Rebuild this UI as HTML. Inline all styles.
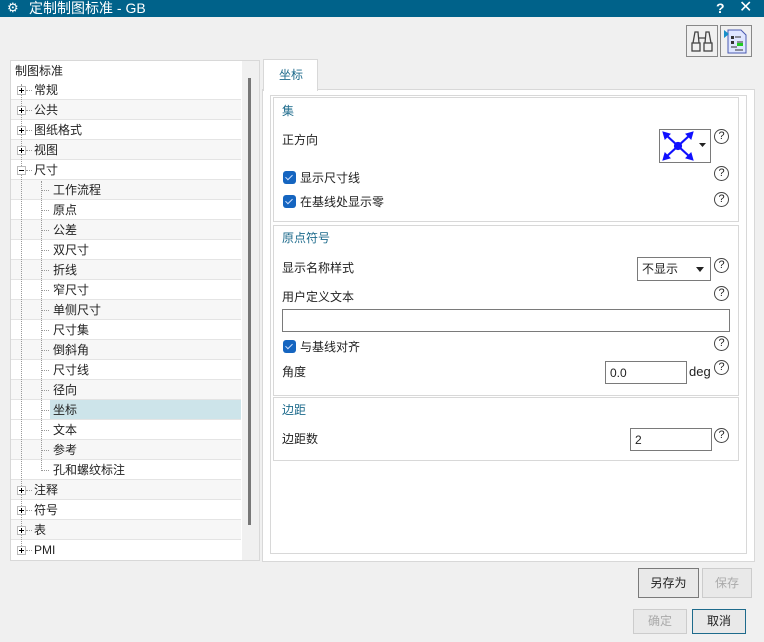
<!DOCTYPE html><html><head><meta charset="utf-8"><style>
*{margin:0;padding:0;box-sizing:border-box}
body{width:764px;height:642px;background:#f0f0f0;font-family:"Liberation Sans","Noto Sans CJK SC",sans-serif;font-size:12px;color:#222;position:relative;overflow:hidden}
.a{position:absolute}
.t{position:absolute;white-space:nowrap;line-height:14px}
.row{position:absolute;left:11px;width:230px;height:20px;border-bottom:1px solid #e4e4e4}
.row.g{background:#f7f7f7}
.row span{position:absolute;top:3px;line-height:14px;z-index:3}
.box{position:absolute;left:6px;top:6px;width:9px;height:9px;border:1px solid #bbb;background:#fff;z-index:4}
.box:before{content:"";position:absolute;left:1px;top:3px;width:5px;height:1px;background:#000}
.box.p:after{content:"";position:absolute;left:3px;top:1px;width:1px;height:5px;background:#000}
.hd{position:absolute;left:15px;top:10px;width:6px;border-top:1px dotted #999}
.hc{position:absolute;left:30px;top:10px;width:8px;border-top:1px dotted #999;z-index:3}
.vl{position:absolute;border-left:1px dotted #999;z-index:2}
.grp{position:absolute;left:273px;width:466px;border:1px solid #d8d8d8;background:#fff}
.gt{color:#1e6b8c}
.q{position:absolute;width:15px;height:15px;border:1px solid #444;border-radius:50%;font-size:11px;line-height:13px;text-align:center;color:#222;background:#fff}
.cb{position:absolute;width:13px;height:13px;background:#1565c0;border-radius:3px}
.cb:after{content:"";position:absolute;left:4px;top:2px;width:3px;height:6px;border:solid #cfe0ff;border-width:0 1px 1px 0;transform:rotate(45deg)}
.inp{position:absolute;background:#fff;border:1px solid #7a7a7a;padding-left:8px;line-height:22px;font-size:12px}
.btn{position:absolute;border:1px solid #adadad;background:#e9e9e9;text-align:center;font-size:12px}
</style></head><body>
<div class="a" style="left:0;top:0;width:764px;height:17px;background:#00628a"></div>
<div class="t" style="left:7px;top:1px;color:#fff;font-size:13px">⚙</div>
<div class="t" style="left:29px;top:0px;color:#fff;font-size:14px;line-height:16px">定制制图标准 - GB</div>
<div class="t" style="left:716px;top:0px;color:#fff;font-size:14px;font-weight:bold;line-height:16px">?</div>
<div class="t" style="left:739px;top:-1px;color:#fff;font-size:16px;line-height:18px">✕</div>

<div class="a" style="left:686px;top:25px;width:32px;height:32px;border:1px solid #888;background:#f0f0f0">
<svg width="30" height="30"><g fill="none" stroke="#444" stroke-width="1.3"><rect x="5" y="17" width="8" height="8"/><rect x="17" y="17" width="8" height="8"/><path d="M6 17 L8 6 H11 L12 17 M18 17 L19 6 H22 L24 17 M12 12 H18"/></g></svg></div>
<div class="a" style="left:720px;top:25px;width:32px;height:32px;border:1px solid #888;background:#f0f0f0">
<svg width="30" height="30"><path d="M7 4 H20 L25 9 V27 H7Z" fill="#dfe6ff" stroke="#4a5ab0"/><path d="M3 4 L8 8 L3 12Z" fill="#1a8fc8"/><rect x="10" y="10" width="3" height="3" fill="#333"/><rect x="10" y="15" width="3" height="3" fill="#333"/><path d="M14 11 H20 M16 16 H22 M10 21 H16 M14 24 H22" stroke="#333"/><rect x="16" y="17" width="6" height="3" fill="#2c2"/></svg></div>

<!-- tree -->
<div class="a" style="left:10px;top:60px;width:250px;height:501px;border:1px solid #d8d8d8;background:#fff"></div>
<div class="a" style="left:242px;top:61px;width:17px;height:499px;background:#f0f0f0"></div>
<div class="a" style="left:248px;top:78px;width:3px;height:447px;background:#777"></div>
<div class="t" style="left:15px;top:64px">制图标准</div>
<div class="row" style="top:80px"><div class="box p"></div><div class="hd"></div><span style="left:23px">常规</span></div>
<div class="row g" style="top:100px"><div class="box p"></div><div class="hd"></div><span style="left:23px">公共</span></div>
<div class="row" style="top:120px"><div class="box p"></div><div class="hd"></div><span style="left:23px">图纸格式</span></div>
<div class="row g" style="top:140px"><div class="box p"></div><div class="hd"></div><span style="left:23px">视图</span></div>
<div class="row" style="top:160px"><div class="box"></div><div class="hd"></div><span style="left:23px">尺寸</span></div>
<div class="row g" style="top:180px"><div class="hc"></div><span style="left:42px">工作流程</span></div>
<div class="row" style="top:200px"><div class="hc"></div><span style="left:42px">原点</span></div>
<div class="row g" style="top:220px"><div class="hc"></div><span style="left:42px">公差</span></div>
<div class="row" style="top:240px"><div class="hc"></div><span style="left:42px">双尺寸</span></div>
<div class="row g" style="top:260px"><div class="hc"></div><span style="left:42px">折线</span></div>
<div class="row" style="top:280px"><div class="hc"></div><span style="left:42px">窄尺寸</span></div>
<div class="row g" style="top:300px"><div class="hc"></div><span style="left:42px">单侧尺寸</span></div>
<div class="row" style="top:320px"><div class="hc"></div><span style="left:42px">尺寸集</span></div>
<div class="row g" style="top:340px"><div class="hc"></div><span style="left:42px">倒斜角</span></div>
<div class="row" style="top:360px"><div class="hc"></div><span style="left:42px">尺寸线</span></div>
<div class="row g" style="top:380px"><div class="hc"></div><span style="left:42px">径向</span></div>
<div class="row" style="top:400px"><div class="hc"></div><div class="a" style="left:39px;top:0;width:191px;height:19px;background:#cde4ea"></div><span style="left:42px">坐标</span></div>
<div class="row" style="top:420px"><div class="hc"></div><span style="left:42px">文本</span></div>
<div class="row g" style="top:440px"><div class="hc"></div><span style="left:42px">参考</span></div>
<div class="row" style="top:460px"><div class="hc"></div><span style="left:42px">孔和螺纹标注</span></div>
<div class="row g" style="top:480px"><div class="box p"></div><div class="hd"></div><span style="left:23px">注释</span></div>
<div class="row" style="top:500px"><div class="box p"></div><div class="hd"></div><span style="left:23px">符号</span></div>
<div class="row g" style="top:520px"><div class="box p"></div><div class="hd"></div><span style="left:23px">表</span></div>
<div class="row" style="top:540px;border:none"><div class="box p"></div><div class="hd"></div><span style="left:23px">PMI</span></div>
<div class="vl" style="left:21px;top:84px;height:466px"></div>
<div class="vl" style="left:41px;top:181px;height:290px"></div>

<!-- right panel -->
<div class="a" style="left:262px;top:89px;width:493px;height:473px;border:1px solid #d8d8d8;background:#fff"></div>
<div class="a" style="left:263px;top:59px;width:55px;height:32px;border:1px solid #d8d8d8;border-bottom:none;background:#fff"></div>
<div class="t" style="left:279px;top:68px;color:#1e6b8c">坐标</div>
<div class="a" style="left:270px;top:95px;width:477px;height:459px;border:1px solid #d8d8d8;background:#fff"></div>

<div class="grp" style="top:97px;height:125px"></div>
<div class="t gt" style="left:282px;top:104px">集</div>
<div class="t" style="left:282px;top:133px">正方向</div>
<div class="a" style="left:659px;top:129px;width:52px;height:34px;border:1px solid #7a7a7a;background:#fff">
<svg width="50" height="32"><g stroke="#1010ff" stroke-width="2.2" fill="#1010ff"><path d="M6 5 L30 27 M30 5 L6 27"/><circle cx="18" cy="16" r="3"/><path d="M3 2 L10 4 L5 9Z M33 2 L26 4 L31 9Z M3 30 L10 28 L5 23Z M33 30 L26 28 L31 23Z" stroke-width="1"/></g><path d="M39 13 H46 L42.5 17Z" fill="#222"/></svg></div>
<div class="q" style="left:714px;top:129px">?</div>
<div class="cb" style="left:283px;top:171px"></div><div class="t" style="left:300px;top:171px">显示尺寸线</div>
<div class="q" style="left:714px;top:166px">?</div>
<div class="cb" style="left:283px;top:195px"></div><div class="t" style="left:300px;top:195px">在基线处显示零</div>
<div class="q" style="left:714px;top:192px">?</div>

<div class="grp" style="top:225px;height:171px"></div>
<div class="t gt" style="left:282px;top:231px">原点符号</div>
<div class="t" style="left:282px;top:261px">显示名称样式</div>
<div class="inp" style="left:637px;top:257px;width:74px;height:24px;line-height:22px;padding-left:4px">不显示<svg class="a" style="left:58px;top:9px" width="8" height="5"><path d="M0 0H8L4 5Z" fill="#222"/></svg></div>
<div class="q" style="left:714px;top:258px">?</div>
<div class="t" style="left:282px;top:290px">用户定义文本</div>
<div class="q" style="left:714px;top:286px">?</div>
<div class="inp" style="left:282px;top:309px;width:448px;height:23px"></div>
<div class="cb" style="left:283px;top:340px"></div><div class="t" style="left:300px;top:340px">与基线对齐</div>
<div class="q" style="left:714px;top:336px">?</div>
<div class="t" style="left:282px;top:365px">角度</div>
<div class="inp" style="left:605px;top:361px;width:82px;height:23px;padding-left:4px">0.0</div>
<div class="t" style="left:689px;top:365px;font-size:13px">deg</div>
<div class="q" style="left:714px;top:360px">?</div>

<div class="grp" style="top:397px;height:64px"></div>
<div class="t gt" style="left:282px;top:403px">边距</div>
<div class="t" style="left:282px;top:432px">边距数</div>
<div class="inp" style="left:630px;top:428px;width:82px;height:23px;padding-left:4px">2</div>
<div class="q" style="left:714px;top:428px">?</div>

<div class="btn" style="left:638px;top:568px;width:61px;height:30px;line-height:28px;border-color:#7a7a7a">另存为</div>
<div class="btn" style="left:702px;top:568px;width:50px;height:30px;line-height:28px;border-color:#ccc;color:#aaa">保存</div>
<div class="btn" style="left:633px;top:609px;width:54px;height:25px;line-height:23px;border-color:#ccc;color:#aaa">确定</div>
<div class="btn" style="left:692px;top:609px;width:54px;height:25px;line-height:23px;border-color:#1e6b8c">取消</div>
</body></html>
